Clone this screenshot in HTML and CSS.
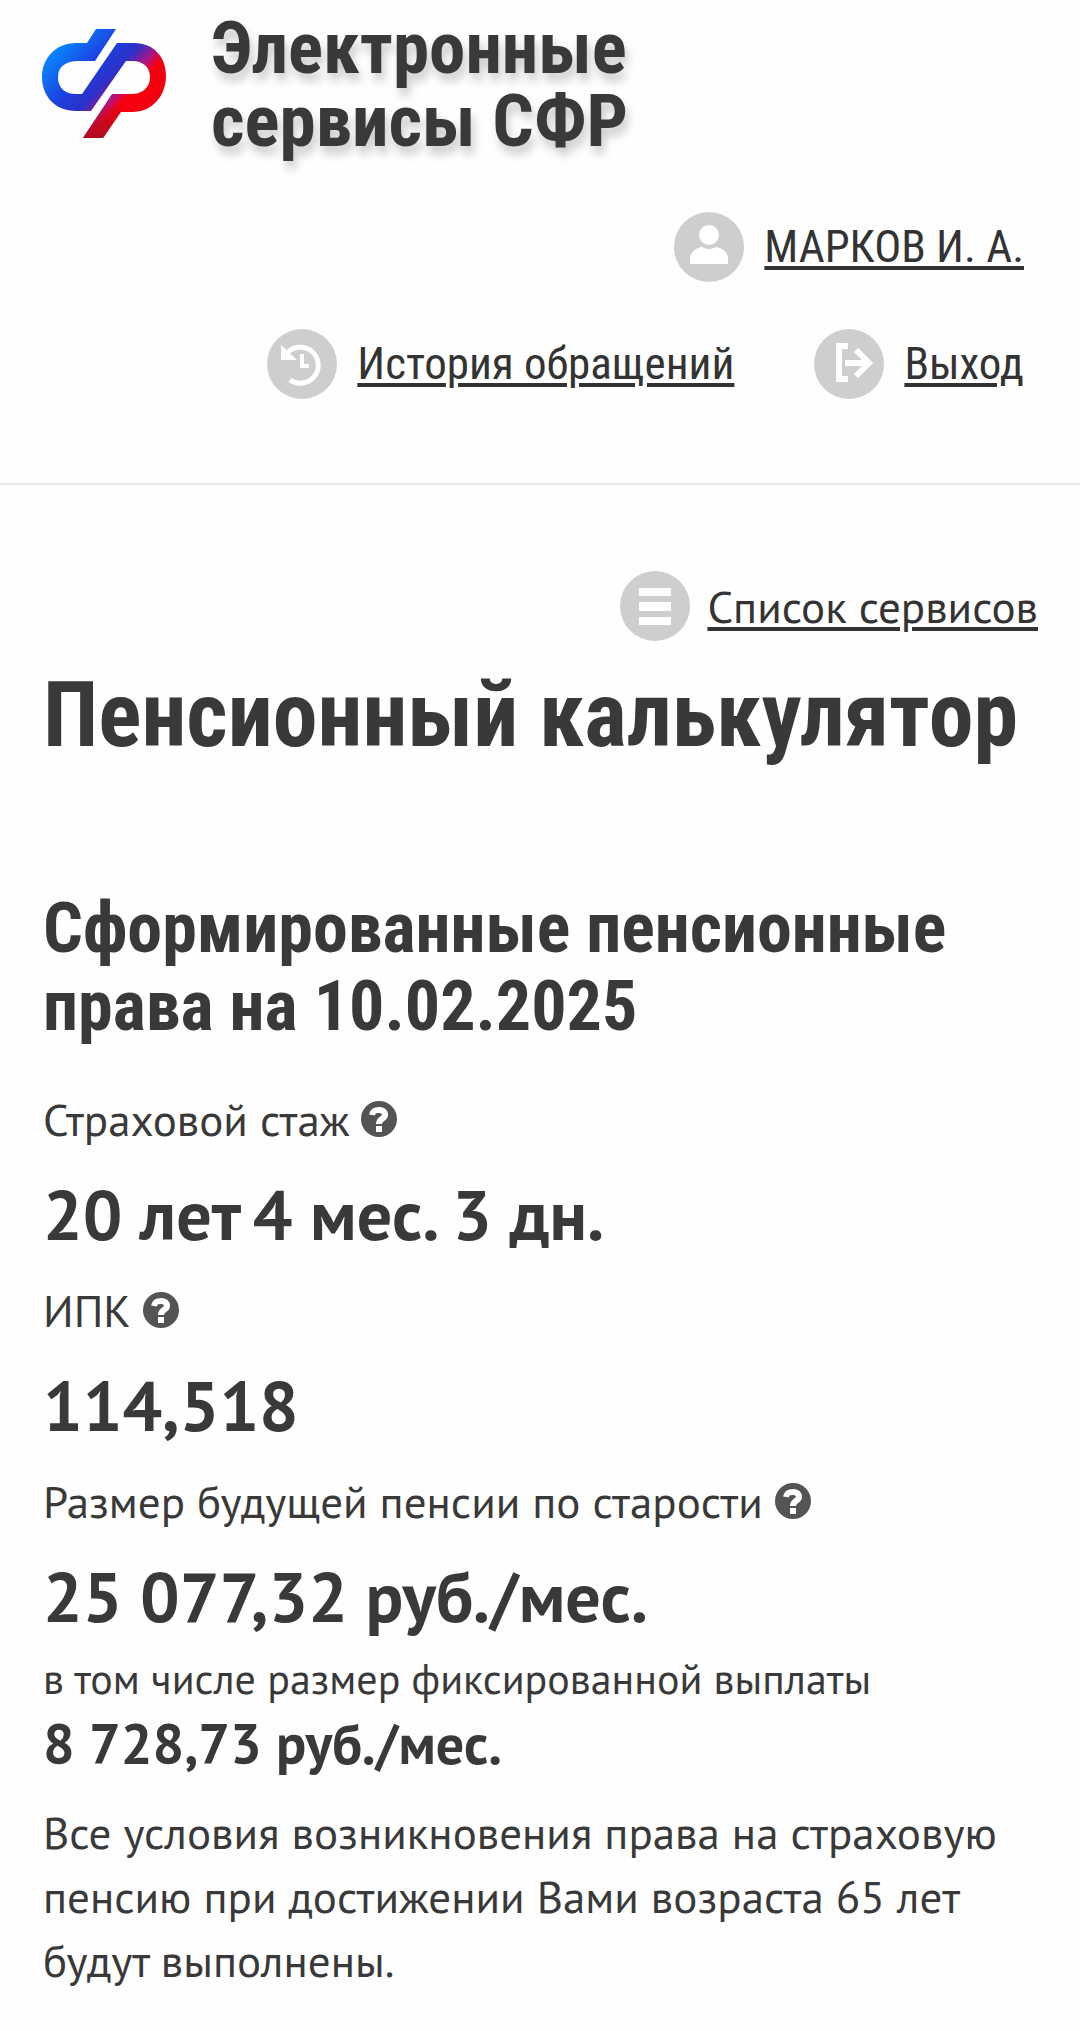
FILE: index.html
```html
<!DOCTYPE html>
<html lang="ru">
  <head>
    <meta charset="UTF-8" />
    <meta name="viewport" content="width=device-width, initial-scale=1.0" />
    <title>Пенсионный калькулятор</title>
    <link rel="stylesheet" href="styles.css">
  </head>
  <body>
    <header class="header">
      <div class="brand">
        <svg class="logo" viewBox="0 0 124 109" aria-hidden="true">
          <defs>
            <linearGradient id="logo-fill" gradientUnits="userSpaceOnUse" x1="10" y1="10" x2="100" y2="93">
              <stop offset="0" stop-color="#0a8cff" />
              <stop offset="0.12" stop-color="#0c7cfa" />
              <stop offset="0.38" stop-color="#1c40de" />
              <stop offset="0.56" stop-color="#2c30c8" />
              <stop offset="0.69" stop-color="#b01480" />
              <stop offset="0.77" stop-color="#f5000f" />
              <stop offset="1" stop-color="#f2000f" />
            </linearGradient>
            <linearGradient id="logo-stem" x1="0" y1="0" x2="0" y2="1">
              <stop offset="0.2" stop-color="#b00c22" stop-opacity="0" />
              <stop offset="1" stop-color="#b00c22" />
            </linearGradient>
          </defs>
          <path fill="url(#logo-fill)" d="M54 0H74L53 32H37C23 32 16 38 16 48C16 59 23 65 34 65H40L75 14H92C112 14 124 28 124 47C124 67 110 83 90 83H79L61 109H41L70 65H90C101 65 108 58 108 48C108 38 101 32 90 32H84L49 82H34C13 82 0 67 0 48C0 29 14 14 34 14H45Z" />
          <path fill="url(#logo-stem)" d="M70 65H91L61 109H41Z" />
        </svg>
        <div class="brand-name">Электронные сервисы СФР</div>
      </div>
      <nav class="user-nav">
        <a class="nav-link" href="#">
          <svg class="icon" viewBox="0 0 70 70" aria-hidden="true">
            <circle cx="35" cy="35" r="35" fill="#cecece" />
            <ellipse cx="35" cy="23" rx="10" ry="10" fill="#fff" />
            <path fill="#fff" d="M16 52V47C16 40 22 36 28 35Q35 39 42 35C48 36 54 40 54 47V52Z" />
          </svg>
          <span>МАРКОВ И. А.</span>
        </a>
        <a class="nav-link" href="#">
          <svg class="icon" viewBox="0 0 70 70" aria-hidden="true">
            <circle cx="35" cy="35" r="35" fill="#cecece" />
            <path fill="none" stroke="#fff" stroke-width="5" d="M21 23A18 18 0 1 1 23 51" />
            <path fill="#fff" d="M14 16V31H30Z" />
            <path fill="none" stroke="#fff" stroke-width="4" d="M35 25V37H42" />
          </svg>
          <span>История обращений</span>
        </a>
        <a class="nav-link" href="#">
          <svg class="icon" viewBox="0 0 70 70" aria-hidden="true">
            <circle cx="35" cy="35" r="35" fill="#cecece" />
            <path fill="none" stroke="#fff" stroke-width="6" d="M34 17H25V50H34" />
            <path fill="none" stroke="#fff" stroke-width="6" d="M31 34H55M42 21L55 34L42 47" />
          </svg>
          <span>Выход</span>
        </a>
      </nav>
    </header>

    <main class="content">
      <a class="services-link" href="#">
        <svg class="icon" viewBox="0 0 70 70" aria-hidden="true">
          <circle cx="35" cy="35" r="35" fill="#cecece" />
          <path fill="#fff" d="M19 17H51V25H19ZM19 31H51V40H19ZM19 46H51V54H19Z" />
        </svg>
        <span>Список сервисов</span>
      </a>

      <h1>Пенсионный калькулятор</h1>
      <h2>Сформированные пенсионные права на 10.02.2025</h2>

      <dl class="rights">
        <dt>
          Страховой стаж
          <button class="hint" type="button" aria-label="Подсказка: страховой стаж"><svg viewBox="0 0 36 36" aria-hidden="true"><use href="#question" /></svg></button>
        </dt>
        <dd>20 лет&thinsp;4 мес. 3 дн.</dd>
        <dt>
          ИПК
          <button class="hint" type="button" aria-label="Подсказка: ИПК"><svg viewBox="0 0 36 36" aria-hidden="true"><use href="#question" /></svg></button>
        </dt>
        <dd>114,518</dd>
        <dt>
          Размер будущей пенсии по старости
          <button class="hint" type="button" aria-label="Подсказка: размер пенсии"><svg viewBox="0 0 36 36" aria-hidden="true"><use href="#question" /></svg></button>
        </dt>
        <dd>25 077,32 руб./мес.</dd>
      </dl>

      <div class="fixed-label">в том числе размер фиксированной выплаты</div>
      <div class="fixed-value">8 728,73 руб./мес.</div>

      <p class="note">Все условия возникновения права на страховую пенсию при достижении Вами возраста 65 лет будут выполнены.</p>
    </main>

    <svg class="sprite" aria-hidden="true">
      <symbol id="question" viewBox="0 0 36 36">
        <circle cx="18" cy="18" r="18" fill="#545454" />
        <path fill="none" stroke="#fff" stroke-width="6" d="M11 14C12 9 15 9 18 9C22 9 24 11 24 14C24 18 18 17 18 23" />
        <path fill="#fff" d="M15 25H21V31H15Z" />
      </symbol>
    </svg>
  </body>
</html>
```
FILE: styles.css
```css
* {
  margin: 0;
  padding: 0;
  box-sizing: border-box;
}
body {
  background: #fefefe;
  color: #393939;
  font-family: "PT Sans", "Noto Sans", sans-serif;
  font-size: 45px;
}
a {
  color: #333;
}
.header {
  padding: 12px 56px 84px 42px;
  border-bottom: 2px solid #e8e8e8;
}
.brand {
  display: flex;
  align-items: flex-start;
  gap: 45px;
}
.logo {
  width: 124px;
  height: 109px;
  margin-top: 17px;
}
.brand-name,
.nav-link,
h1,
h2 {
  font-family: "Roboto Condensed", "Liberation Sans Narrow", Roboto, sans-serif;
}
.brand-name {
  max-width: 480px;
  font-size: 73px;
  font-weight: 700;
  line-height: 73px;
  text-shadow: 3px 8px 10px rgba(0, 0, 0, 0.2);
}
.user-nav {
  display: flex;
  flex-wrap: wrap;
  justify-content: flex-end;
  gap: 47px 80px;
  margin-top: 54px;
}
.nav-link,
.services-link {
  display: flex;
  align-items: center;
  gap: 20px;
  line-height: 70px;
  text-underline-offset: 4px;
  text-decoration-thickness: 4px;
}
.nav-link:first-child {
  margin-left: 50%;
}
.icon {
  width: 70px;
  height: 70px;
}
.content {
  padding: 86px 42px 40px 43px;
}
.services-link {
  justify-content: flex-end;
  gap: 17px;
}
h1 {
  margin-top: 20px;
  font-size: 90px;
  line-height: 110px;
}
h2 {
  margin-top: 118px;
  font-size: 70px;
  line-height: 78px;
}
.rights {
  margin-top: 42px;
}
dt {
  display: flex;
  align-items: center;
  gap: 12px;
  line-height: 64px;
}
dd {
  margin: 16px 0;
  font-size: 70px;
  font-weight: 700;
  line-height: 95px;
}
dd:last-child {
  margin-bottom: 8px;
}
.hint {
  width: 36px;
  height: 36px;
  border: 0;
  background: none;
  cursor: pointer;
}
.hint svg {
  display: block;
  width: 36px;
  height: 36px;
}
.fixed-label {
  font-size: 42px;
  line-height: 54px;
}
.fixed-value {
  font-size: 56px;
  font-weight: 700;
  line-height: 74px;
}
.note {
  margin-top: 20px;
  line-height: 64px;
}
.sprite {
  display: none;
}
```
